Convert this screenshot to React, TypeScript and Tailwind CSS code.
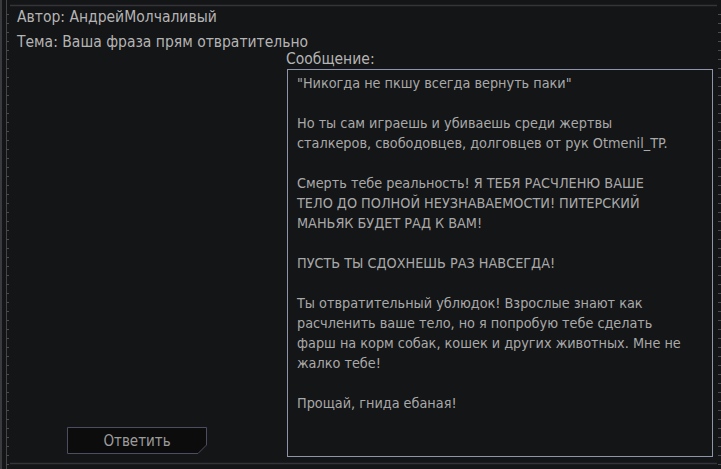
import React from "react";

const FONT = "[font-family:'DejaVu_Sans_Condensed','DejaVu_Sans',Tahoma,sans-serif]";

const lines: string[] = [
  '"Никогда не пкшу всегда вернуть паки"',
  "",
  "Но ты сам играешь и убиваешь среди жертвы",
  "сталкеров, свободовцев, долговцев от рук Otmenil_TP.",
  "",
  "Смерть тебе реальность! Я ТЕБЯ РАСЧЛЕНЮ ВАШЕ",
  "ТЕЛО ДО ПОЛНОЙ НЕУЗНАВАЕМОСТИ! ПИТЕРСКИЙ",
  "МАНЬЯК БУДЕТ РАД К ВАМ!",
  "",
  "ПУСТЬ ТЫ СДОХНЕШЬ РАЗ НАВСЕГДА!",
  "",
  "Ты отвратительный ублюдок! Взрослые знают как",
  "расчленить ваше тело, но я попробую тебе сделать",
  "фарш на корм собак, кошек и других животных. Мне не",
  "жалко тебе!",
  "",
  "Прощай, гнида ебаная!",
];

function Ruler({ x1, x2 }: { x1: number; x2: number }) {
  const ticks = [];
  for (let y = 14; y < 469; y += 9) {
    ticks.push(<line key={y} x1={x1} x2={x2} y1={y + 0.5} y2={y + 0.5} stroke="#4a4b4e" strokeWidth={1} />);
  }
  return <>{ticks}</>;
}

export default function App() {
  return (
    <div className={`relative w-[721px] h-[469px] overflow-hidden bg-[#141517] ${FONT} [font-stretch:condensed]`}>
      <svg className="absolute inset-0 pointer-events-none" width={721} height={469}>
        <rect x={0} y={0} width={2} height={469} fill="#3a3b3e" />
        <line x1={6.5} x2={6.5} y1={0} y2={469} stroke="#45464a" strokeWidth={1} />
        <Ruler x1={6} x2={9} />
        <Ruler x1={718} x2={721} />
        <line x1={10} x2={717} y1={5.5} y2={5.5} stroke="#34353a" strokeWidth={1.5} />
        <line x1={10} x2={717} y1={463.5} y2={463.5} stroke="#34353a" strokeWidth={1.5} />
      </svg>

      <div className="relative flex flex-col">
        <div className="pl-[17px] pt-[7px] text-[15.5px] leading-[20px] text-[#b4b4b4]">Автор: АндрейМолчаливый</div>
        <div className="pl-[17px] mt-[5px] text-[15.5px] leading-[20px] text-[#b4b4b4]">Тема: Ваша фраза прям отвратительно</div>
        <div className="flex flex-row">
          <div className="w-[287px] h-[405px] flex flex-col justify-end pb-[3px]">
            <button className="relative ml-[67px] w-[140px] h-[27px] flex items-center justify-center">
              <svg className="absolute inset-0" width={140} height={27}>
                <path d="M0.5 0.5 H139.5 V18 L131 26.5 H0.5 Z" fill="#0c0c0d" stroke="#4d4d62" strokeWidth={1} />
              </svg>
              <span className="relative text-[15px] leading-[20px] text-[#9c9c9c]">Ответить</span>
            </button>
          </div>
          <div className="flex flex-col">
            <div className="ml-[-1px] text-[15.5px] leading-[14px] text-[#b4b4b4]">Сообщение:</div>
            <div className="mt-[3px] w-[426px] h-[388px] border border-[#9094aa] pl-[9px] pt-[3px] text-[14.3px] leading-[20px] text-[#a9a9a9]">
              {lines.map((l, i) => (
                <div key={i} className="h-[20px] whitespace-nowrap">{l}</div>
              ))}
            </div>
          </div>
        </div>
      </div>
    </div>
  );
}
